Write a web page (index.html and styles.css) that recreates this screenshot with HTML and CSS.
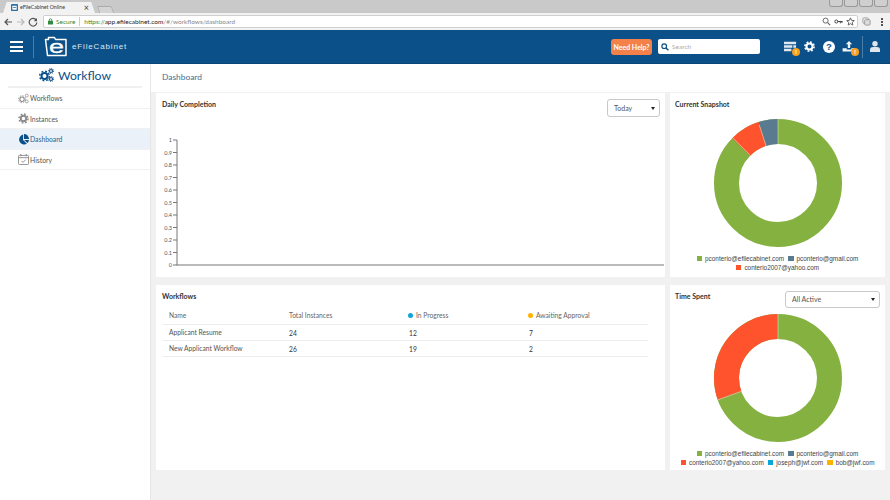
FILE: index.html
```html
<!DOCTYPE html>
<html lang="en">
<head>
<meta charset="utf-8">
<title>eFileCabinet Online</title>
<link rel="stylesheet" href="styles.css">
</head>
<body>
<div class="page">
  <div class="tabstrip">
    <div class="tab">
      <svg class="favicon" viewBox="0 0 8 8"><rect width="8" height="8" rx="1" fill="#2f6fa3"/><rect x="1.5" y="2" width="5" height="4.5" fill="#fff"/><rect x="2.5" y="3.5" width="3" height="1" fill="#2f6fa3"/></svg>
      <span class="tab-title">eFileCabinet Online</span>
      <span class="tab-close">×</span>
    </div>
    <div class="newtab"></div>
    <div class="winctl">
      <span class="winbtn"></span><span class="winbtn"></span><span class="winbtn"></span><span class="winbtn"></span>
    </div>
  </div>
  <div class="toolbar">
    <svg class="tool-ic" viewBox="0 0 10 10"><path d="M9 5H2M5 2 2 5l3 3" fill="none" stroke="#555" stroke-width="1.2"/></svg>
    <svg class="tool-ic" viewBox="0 0 10 10"><path d="M1 5h7M5 2l3 3-3 3" fill="none" stroke="#bbb" stroke-width="1.2"/></svg>
    <svg class="tool-ic" viewBox="0 0 10 10"><path d="M8.2 3.2A3.8 3.8 0 1 0 8.8 5.5" fill="none" stroke="#555" stroke-width="1.2"/><path d="M9 1v3.2H5.8z" fill="#555"/></svg>
    <div class="omnibox">
      <svg class="lock" viewBox="0 0 6 8"><path d="M1.5 3.5V2.2a1.5 1.5 0 0 1 3 0v1.3" fill="none" stroke="#2e8b3d"/><rect y="3.2" width="6" height="4.5" rx=".6" fill="#2e8b3d"/></svg>
      <span class="secure">Secure</span>
      <span class="url-sep"></span>
      <span class="url"><span class="url-s">https://</span><span class="url-h">app.efilecabinet.com</span>/#/workflows/dashboard</span>
      <span class="omni-right">
        <svg class="omni-ic" viewBox="0 0 10 10"><circle cx="4" cy="4" r="2.8" fill="none" stroke="#666" stroke-width="1.1"/><path d="m6 6 3 3" stroke="#666" stroke-width="1.3"/></svg>
        <svg class="omni-ic" viewBox="0 0 10 10"><circle cx="2.6" cy="5" r="1.7" fill="none" stroke="#444" stroke-width="1.1"/><path d="M4 5h5.5M7 5v2M8.8 5v1.6" stroke="#444" stroke-width="1.1"/></svg>
        <svg class="omni-ic" viewBox="0 0 10 10"><path d="m5 1 1.2 2.7 3 .3-2.3 2 .7 3L5 7.4 2.400 9l.7-3L.8 4l3-.3z" fill="none" stroke="#555"/></svg>
      </span>
    </div>
    <svg class="ext-ic" viewBox="0 0 10 10"><rect x="1" y="1" width="6" height="6" rx="1" fill="none" stroke="#999"/><rect x="3" y="3" width="6" height="6" rx="1" fill="#ddd" stroke="#999"/></svg>
    <span class="kebab"><i></i><i></i><i></i></span>
  </div>

  <header class="appbar">
    <button class="burger" aria-label="Menu"><i></i><i></i><i></i></button>
    <span class="vsep"></span>
    <svg class="logo" viewBox="0 0 24 22">
      <path d="M1.500 3.500h3V1.500h6l1 2h10.500V19.500H3.500z" fill="none" stroke="#fff" stroke-width="1.500" stroke-linejoin="round"/>
      <text x="12.500" y="16.500" text-anchor="middle" class="logo-e" textLength="15" lengthAdjust="spacingAndGlyphs">e</text>
    </svg>
    <span class="brand">eFileCabinet</span>
    <span class="spacer"></span>
    <a class="help-btn">Need Help?</a>
    <div class="searchbox">
      <svg class="search-ic" viewBox="0 0 10 10"><circle cx="4" cy="4" r="2.900" fill="none" stroke="#0b5089" stroke-width="1.500"/><path d="m6.200 6.200 3 3" stroke="#0b5089" stroke-width="1.800"/></svg>
      <span>Search</span>
    </div>
    <div class="icon-row">
      <span class="appicon ic-list">
        <svg viewBox="0 0 14 11"><path d="M0 .5h13v2.600H0zM0 4.200h9v2.600H0zM0 8h8v2.600H0zM10 4.200h3v2.600h-3z" fill="#dfe8f0"/></svg>
        <b class="alert">!</b>
      </span>
      <svg class="appicon ic-gear" viewBox="0 0 12 12"><circle cx="6" cy="6" r="3.300" fill="none" stroke="#fff" stroke-width="2.200"/><circle cx="6" cy="6" r="5" fill="none" stroke="#fff" stroke-width="1.800" stroke-dasharray="2 1.930"/></svg>
      <svg class="appicon ic-help" viewBox="0 0 12 12"><circle cx="6" cy="6" r="6" fill="#fff"/><text x="6" y="9.300" text-anchor="middle" class="help-q">?</text></svg>
      <span class="appicon ic-up">
        <svg viewBox="0 0 14 12"><path d="M7 0 3.500 3.500H5.700V7.500H8.300V3.500H10.500zM0 8h4.500v1.200h5V8H14v3.500H0z" fill="#eef3f7"/></svg>
        <b class="alert">!</b>
      </span>
      <span class="vsep vsep-r"></span>
      <svg class="appicon ic-user" viewBox="0 0 10 11"><circle cx="5" cy="2.800" r="2.700" fill="#dfe6ec"/><path d="M0 11V8.500C0 6.800 1.500 6 3 6h4c1.500 0 3 .8 3 2.500V11z" fill="#dfe6ec"/></svg>
    </div>
  </header>

  <div class="body">
    <aside class="sidebar">
      <h1 class="side-title">
        <svg class="title-ic" viewBox="0 0 15 14">
          <circle cx="5.500" cy="8" r="3" fill="none" stroke="#0b5089" stroke-width="2"/>
          <circle cx="5.500" cy="8" r="4.800" fill="none" stroke="#0b5089" stroke-width="1.500" stroke-dasharray="1.900 1.870"/>
          <circle cx="12" cy="3" r="1.500" fill="none" stroke="#0b5089" stroke-width="1.200"/>
          <circle cx="12" cy="3" r="2.600" fill="none" stroke="#0b5089" stroke-width="1" stroke-dasharray="1 1.040"/>
          <circle cx="12" cy="11" r="1.500" fill="none" stroke="#0b5089" stroke-width="1.200"/>
          <circle cx="12" cy="11" r="2.600" fill="none" stroke="#0b5089" stroke-width="1" stroke-dasharray="1 1.040"/>
        </svg>
        <span>Workflow</span>
      </h1>
      <nav class="side-nav">
        <a class="nav-item">
          <svg class="nav-ic" viewBox="0 0 15 14">
            <circle cx="5.500" cy="8" r="3" fill="none" stroke="#8a8a8a" stroke-width="1.400"/>
            <circle cx="5.500" cy="8" r="4.800" fill="none" stroke="#8a8a8a" stroke-width="1.200" stroke-dasharray="1.900 1.870"/>
            <circle cx="12" cy="3" r="2" fill="none" stroke="#8a8a8a"/>
            <circle cx="12" cy="11" r="2" fill="none" stroke="#8a8a8a"/>
          </svg>
          <span>Workflows</span>
        </a>
        <a class="nav-item">
          <svg class="nav-ic" viewBox="0 0 12 12"><circle cx="6" cy="6" r="3" fill="none" stroke="#8a8a8a" stroke-width="2"/><circle cx="6" cy="6" r="4.900" fill="none" stroke="#8a8a8a" stroke-width="1.600" stroke-dasharray="1.900 1.950"/></svg>
          <span>Instances</span>
        </a>
        <a class="nav-item active">
          <svg class="nav-ic" viewBox="0 0 12 12"><path d="M5.500 .6V6.500L9.700 10.600A5.500 5.500 0 1 1 5.500 .6z" fill="#0b5089"/><path d="M6.500 0A5.500 5.500 0 0 1 12 5.500H6.500z" fill="#0b5089"/><path d="M6.700 6.500H12A5.500 5.500 0 0 1 10.400 9.900z" fill="#0b5089"/></svg>
          <span>Dashboard</span>
        </a>
        <a class="nav-item">
          <svg class="nav-ic" viewBox="0 0 12 12"><rect x=".5" y="1.500" width="11" height="10" rx="1" fill="none" stroke="#8a8a8a"/><path d="M.5 4h11M3 0v2.500M9 0v2.500" stroke="#8a8a8a"/><path d="m3.700 7.500 1.700 1.700 3-3" fill="none" stroke="#8a8a8a"/></svg>
          <span>History</span>
        </a>
      </nav>
    </aside>

    <main class="content">
      <div class="crumb">Dashboard</div>
      <div class="cards">
        <section class="card">
          <div class="card-head">
            <h2>Daily Completion</h2>
            <div class="select sel-today"><span>Today</span><i></i></div>
          </div>
          <svg class="axis" viewBox="0 0 508 135">
            <path d="M21 4V129.500M17 4h4M17 16.500h4M17 29h4M17 41.500h4M17 54h4M17 66.500h4M17 79h4M17 91.500h4M17 104h4M17 116.500h4M17 129h491" fill="none" stroke="#777" stroke-width="1"/>
            <g class="tick">
              <text x="16" y="6">1</text><text x="16" y="18.500">0.9</text><text x="16" y="31">0.8</text><text x="16" y="43.500">0.7</text><text x="16" y="56">0.6</text><text x="16" y="68.500">0.5</text><text x="16" y="81">0.4</text><text x="16" y="93.500">0.3</text><text x="16" y="106">0.2</text><text x="16" y="118.500">0.1</text><text x="16" y="131">0</text>
            </g>
          </svg>
        </section>

        <section class="card">
          <div class="card-head"><h2>Current Snapshot</h2></div>
          <svg class="donut donut-a" viewBox="0 0 130 130">
            <circle cx="65" cy="65" r="51.500" fill="none" stroke="#85b141" stroke-width="25"/>
            <path d="M65 13.500A51.500 51.500 0 0 0 49.300 16" fill="none" stroke="#5a7a90" stroke-width="25"/>
            <path d="M49.300 16A51.500 51.500 0 0 0 28.200 29" fill="none" stroke="#ff532e" stroke-width="25"/>
            <path d="M65 1V26M46.300 7 53.400 29M19.800 19.700 37 37" stroke="#fff" stroke-width=".6" opacity=".7"/>
          </svg>
          <ul class="legend">
            <li><i class="c-green"></i>pconterio@efilecabinet.com</li>
            <li><i class="c-slate"></i>pconterio@gmail.com</li>
            <li><i class="c-red"></i>conterio2007@yahoo.com</li>
          </ul>
        </section>

        <section class="card">
          <div class="card-head wf-head"><h2>Workflows</h2></div>
          <table class="wf-table">
            <thead>
              <tr>
                <th>Name</th>
                <th>Total Instances</th>
                <th><i class="dot c-cyan"></i>In Progress</th>
                <th><i class="dot c-yellow"></i>Awaiting Approval</th>
              </tr>
            </thead>
            <tbody>
              <tr><td>Applicant Resume</td><td class="num">24</td><td class="num">12</td><td class="num">7</td></tr>
              <tr><td>New Applicant Workflow</td><td class="num">26</td><td class="num">19</td><td class="num">2</td></tr>
            </tbody>
          </table>
        </section>

        <section class="card">
          <div class="card-head head-time">
            <h2>Time Spent</h2>
            <div class="select sel-active"><span>All Active</span><i></i></div>
          </div>
          <svg class="donut donut-b" viewBox="0 0 130 130">
            <circle cx="65" cy="65" r="51.500" fill="none" stroke="#85b141" stroke-width="25"/>
            <path d="M65 13.500A51.500 51.500 0 0 0 16.600 82.600" fill="none" stroke="#ff532e" stroke-width="25"/>
            <path d="M65 1V26M5 86.800 28.500 78.300" stroke="#fff" stroke-width=".6" opacity=".7"/>
          </svg>
          <ul class="legend">
            <li><i class="c-green"></i>pconterio@efilecabinet.com</li>
            <li><i class="c-slate"></i>pconterio@gmail.com</li>
            <li><i class="c-red"></i>conterio2007@yahoo.com</li>
            <li><i class="c-cyan"></i>joseph@jwf.com</li>
            <li><i class="c-yellow"></i>bob@jwf.com</li>
          </ul>
        </section>
      </div>
    </main>
  </div>
</div>
</body>
</html>
```
FILE: styles.css
```css
* { box-sizing: border-box; }
html, body { margin: 0; padding: 0; }
body { background: #f1f1f1; font-family: Lato, "Noto Sans", sans-serif; color: #444; }
.page { width: 890px; height: 500px; overflow: hidden; display: flex; flex-direction: column; }

/* browser chrome */
.tabstrip { height: 13px; background: #c9c9c9; display: flex; align-items: flex-end; padding-left: 3px; flex: none; }
.tab { width: 92px; height: 11px; background: #f2f2f2; clip-path: polygon(0 100%, 4% 0, 96% 0, 100% 100%); display: flex; align-items: center; padding-left: 8px; padding-right: 6px; }
.favicon { width: 7px; height: 7px; margin-right: 2px; flex: none; }
.tab-title { font-size: 5.200px; color: #333; white-space: nowrap; flex: 1; line-height: 1; }
.tab-close { font-size: 9px; line-height: 1; color: #444; }
.newtab { width: 15px; height: 7px; margin-left: 3px; background: #d4d4d4; border: 1px solid #aaa; border-bottom: 0; border-radius: 2px 2px 0 0; transform: skewX(20deg); }
.winctl { margin-left: auto; align-self: flex-start; display: flex; gap: 1px; margin-right: 2px; }
.winbtn { width: 14px; height: 7px; border: 1px solid #999; border-top: 0; border-radius: 0 0 3px 3px; background: #cfcfcf; }

.toolbar { height: 17px; background: #f2f2f2; display: flex; align-items: center; padding-left: 3px; flex: none; }
.tool-ic { width: 10px; height: 10px; margin-right: 2.500px; flex: none; }
.tool-ic:nth-child(3) { margin-right: 5px; }
.omnibox { width: 815px; height: 13px; background: #fff; border: 1px solid #cfcfcf; border-radius: 2px; display: flex; align-items: center; padding-left: 4px; font-size: 6.500px; color: #888; flex: none; }
.lock { width: 5px; height: 7px; margin-right: 3px; flex: none; }
.secure { color: #2e8b3d; }
.url-sep { width: 1px; height: 9px; background: #ccc; margin: 0 4px; }
.url { white-space: nowrap; }
.url-s { color: #2e8b3d; }
.url-h { color: #222; }
.omni-right { margin-left: auto; display: flex; gap: 3px; margin-right: 2px; }
.omni-ic { width: 9px; height: 9px; }
.ext-ic { width: 9px; height: 9px; margin-left: 4px; }
.kebab { display: flex; flex-direction: column; gap: 1px; margin-left: 10px; }
.kebab i { width: 2px; height: 2px; background: #555; display: block; }

/* app bar */
.appbar { height: 34px; background: #0b5089; border-bottom: 1px solid #0a4576; display: flex; align-items: center; flex: none; margin-top: 0; }
.burger { width: 13px; height: 11px; margin-left: 10px; padding: 0; border: 0; background: none; display: flex; flex-direction: column; justify-content: space-between; }
.burger i { display: block; height: 2px; background: #fff; width: 100%; }
.vsep { width: 1px; height: 22px; background: #4a7ea8; margin-left: 10px; flex: none; }
.logo { width: 24px; height: 22px; margin-left: 10px; flex: none; }
.logo-e { font: 400 19px "Liberation Sans", sans-serif; fill: #fff; stroke: #fff; stroke-width: .3px; }
.brand { margin-left: 4px; font: 8px "Liberation Sans", sans-serif; letter-spacing: .85px; color: #dfe8f0; }
.spacer { flex: 1; }
.help-btn { width: 41px; height: 16px; background: #f4804a; color: #fff; font-size: 7px; font-weight: 700; border-radius: 3px; display: flex; align-items: center; justify-content: center; white-space: nowrap; }
.searchbox { width: 102px; height: 15px; margin-left: 6px; background: #fff; border-radius: 2px; display: flex; align-items: center; padding-left: 3px; font-size: 6.500px; color: #aaa; }
.search-ic { width: 8px; height: 8px; margin-right: 3px; }
.icon-row { display: flex; align-items: center; margin-left: 24px; margin-right: 10px; }
.appicon { display: block; position: relative; flex: none; }
.appicon svg { display: block; width: 100%; height: 100%; }
.ic-list { width: 13px; height: 11px; }
.ic-gear { width: 11px; height: 11px; margin-left: 7px; }
.ic-help { width: 12px; height: 12px; margin-left: 8px; }
.ic-up { width: 14px; height: 11px; margin-left: 7px; }
.ic-user { width: 10px; height: 11px; margin-left: 7px; }
.help-q { font: 700 9.500px "Liberation Sans", sans-serif; fill: #0b5089; }
.alert { position: absolute; right: -3px; bottom: -4px; width: 8px; height: 8px; border-radius: 50%; background: #f7a11f; color: #fff; font: 700 6px/8px "Liberation Sans", sans-serif; text-align: center; }
.vsep-r { margin-left: 6px; }

/* layout */
.body { flex: 1; display: flex; min-height: 0; }
.sidebar { width: 151px; background: #fff; border-right: 1px solid #e6e6e6; flex: none; }
.side-title { margin: 0 8px; height: 24px; display: flex; align-items: center; justify-content: center; gap: 4px; border-bottom: 2px solid #f0f0f0; font-size: 12.200px; font-weight: 400; color: #0b5089; }
.title-ic { width: 15px; height: 14px; }
.side-nav { display: flex; flex-direction: column; }
.nav-item { height: 20.500px; display: flex; align-items: center; padding: 1px 0 0 18px; font-size: 6.800px; color: #555; border-bottom: 1px solid #f1f1f1; }
.nav-item.active { background: #eaf1f8; color: #2a6390; }
.nav-ic { width: 11px; height: 11px; margin-right: 1px; flex: none; }

.content { flex: 1; min-width: 0; display: flex; flex-direction: column; }
.crumb { height: 28px; background: #fff; padding: 0 0 2px 11px; display: flex; align-items: center; font-size: 8.400px; color: #3d6e96; flex: none; }
.cards { display: grid; grid-template-columns: 509px 215px; grid-template-rows: 184px 185px; column-gap: 5px; row-gap: 8px; padding: 1px 0 0 5px; }
.card { background: #fff; position: relative; display: flex; flex-direction: column; }
.card-head { display: flex; justify-content: space-between; align-items: flex-start; padding: 5px 5px 0 6px; height: 26px; }
.card:nth-child(even) .card-head { padding-left: 5px; }
.card-head h2 { margin: 0; padding-top: 1px; font-size: 7px; font-weight: 700; color: #333; line-height: 10px; }
.select { background: #fff; border: 1px solid #c9c9c9; border-radius: 3px; font-size: 7px; color: #555; display: flex; align-items: center; justify-content: space-between; padding: 0 4px 0 6px; margin-top: 1px; }
.select i { width: 0; height: 0; border-left: 2px solid transparent; border-right: 2px solid transparent; border-top: 3px solid #222; }
.sel-today { width: 53px; height: 18px; }
.sel-active { width: 95px; height: 16.500px; }
.axis { width: 508px; height: 135px; margin-top: 17px; display: block; }
.tick text { font: 5.500px Lato, sans-serif; fill: #555; text-anchor: end; }

.donut { display: block; width: 130px; height: 130px; align-self: center; }
.donut-a { margin-top: -1px; }
.donut-b { margin-top: 2px; }
.legend { list-style: none; margin: 6px 0 0; padding: 0; display: flex; flex-wrap: wrap; justify-content: center; column-gap: 4px; font: 6.400px/9px "Liberation Sans", sans-serif; color: #444; }
.legend li { display: flex; align-items: center; white-space: nowrap; }
.legend li i { width: 5.500px; height: 5.500px; margin-right: 3px; }
.c-green { background: #85b141; }
.c-slate { background: #5a7a90; }
.c-red { background: #ff532e; }
.c-cyan { background: #0ba5d8; }
.c-yellow { background: #ffb300; }

.wf-head { height: 21px; }
.wf-table { width: 485px; margin-left: 7px; border-collapse: collapse; table-layout: fixed; font-size: 6.700px; color: #555; }
.wf-table th { font-weight: 400; text-align: left; height: 18px; padding: 0 0 0 6px; border-bottom: 1px solid #eee; color: #666; }
.wf-table td { height: 16px; padding: 0 0 0 6px; border-bottom: 1px solid #eee; }
.wf-table th:nth-child(1) { width: 120px; }
.wf-table th:nth-child(2) { width: 120px; }
.wf-table th:nth-child(3) { width: 120px; }
.wf-table .num { padding-top: 2px; color: #333; }
.dot { display: inline-block; width: 5px; height: 5px; border-radius: 50%; margin: 0 3px 0 -1px; }
```
